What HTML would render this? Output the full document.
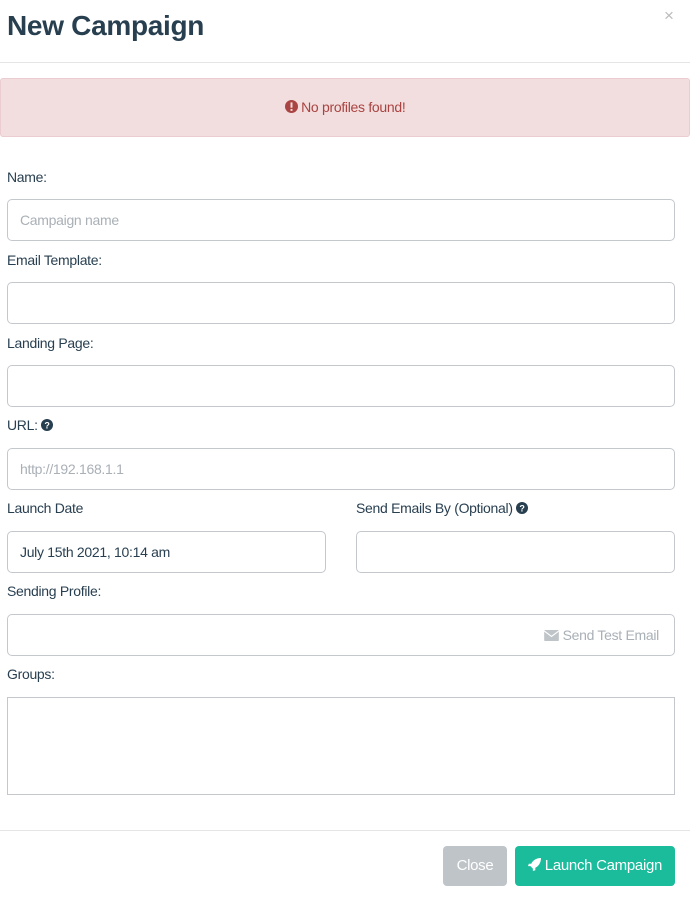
<!DOCTYPE html>
<html><head><meta charset="utf-8"><style>
*{box-sizing:border-box;margin:0;padding:0}
body{width:690px;height:902px;background:#fff;font-family:"Liberation Sans",sans-serif;color:#283f50;position:relative;overflow:hidden}
.a{position:absolute}
h1{position:absolute;left:7px;top:10px;font-size:28px;font-weight:bold;color:#283f50;letter-spacing:-0.3px}
.x{left:664px;top:6px;color:#bbb;font-size:17px}
.hr{left:0;width:690px;height:1px;background:#e5e5e5}
.alert{left:0;top:78px;width:690px;height:59px;background:#f2dede;border:1px solid #ebccd1;border-radius:3px;color:#a94442;font-size:14px;text-align:center;line-height:57px;letter-spacing:-0.3px}
.lbl{left:7px;font-size:14px;color:#283f50;letter-spacing:-0.3px}
.inp{border:1px solid #c4c8cc;border-radius:5px;height:42px;font-size:14px;line-height:40px;padding-left:12px;color:#283f50;letter-spacing:-0.3px}
.ph{color:#a9b0b6}
.btn{top:846px;height:40px;border-radius:4px;color:#fff;font-size:15px;line-height:40px;text-align:center;letter-spacing:-0.3px}
</style></head><body>
<h1>New Campaign</h1>
<div class="a x">×</div>
<div class="a hr" style="top:62px"></div>
<div class="a alert"><svg width="13" height="13" viewBox="0 0 16 16" style="vertical-align:-1px"><circle cx="8" cy="8" r="8" fill="#a94442"/><rect x="6.8" y="3" width="2.4" height="6.5" fill="#f2dede"/><rect x="6.8" y="11" width="2.4" height="2.4" fill="#f2dede"/></svg> No profiles found!</div>

<div class="a lbl" style="top:169px">Name:</div>
<div class="a inp" style="left:7px;top:199px;width:668px"><span class="ph">Campaign name</span></div>
<div class="a lbl" style="top:252px">Email Template:</div>
<div class="a inp" style="left:7px;top:282px;width:668px"></div>
<div class="a lbl" style="top:335px">Landing Page:</div>
<div class="a inp" style="left:7px;top:365px;width:668px"></div>
<div class="a lbl" style="top:417px">URL: <svg width="12" height="12" viewBox="0 0 16 16" style="vertical-align:-1px"><circle cx="8" cy="8" r="8" fill="#283f50"/><text x="8" y="12.5" font-size="12" font-weight="bold" fill="#fff" text-anchor="middle" font-family="Liberation Sans">?</text></svg></div>
<div class="a inp" style="left:7px;top:448px;width:668px"><span class="ph">http://192.168.1.1</span></div>
<div class="a lbl" style="top:500px">Launch Date</div>
<div class="a lbl" style="top:500px;left:356px">Send Emails By (Optional) <svg width="12" height="12" viewBox="0 0 16 16" style="vertical-align:-1px"><circle cx="8" cy="8" r="8" fill="#283f50"/><text x="8" y="12.5" font-size="12" font-weight="bold" fill="#fff" text-anchor="middle" font-family="Liberation Sans">?</text></svg></div>
<div class="a inp" style="left:7px;top:531px;width:319px">July 15th 2021, 10:14 am</div>
<div class="a inp" style="left:356px;top:531px;width:319px"></div>
<div class="a lbl" style="top:583px">Sending Profile:</div>
<div class="a inp" style="left:7px;top:614px;width:668px;text-align:right;padding-right:15px;color:#a9b0b6"><svg width="15" height="11" viewBox="0 0 16 12" style="vertical-align:-1px"><rect width="16" height="12" rx="1" fill="#bfc4c8"/><path d="M0 1 L8 7 L16 1" stroke="#fff" stroke-width="1.3" fill="none"/></svg> Send Test Email</div>
<div class="a lbl" style="top:666px">Groups:</div>
<div class="a" style="left:7px;top:697px;width:668px;height:98px;border:1px solid #c4c8cc"></div>
<div class="a hr" style="top:830px"></div>
<div class="a btn" style="left:443px;width:64px;background:#bfc4c8">Close</div>
<div class="a btn" style="left:515px;width:160px;background:#1abc9c"><svg width="13" height="13" viewBox="0 0 16 16" style="vertical-align:-1px"><path d="M16 0 C10 0 6 3 4 7 L1 7 L0 10 L3 10 L6 13 L6 16 L9 15 L9 12 C13 10 16 6 16 0Z" fill="#fff"/></svg> Launch Campaign</div>
</body></html>
